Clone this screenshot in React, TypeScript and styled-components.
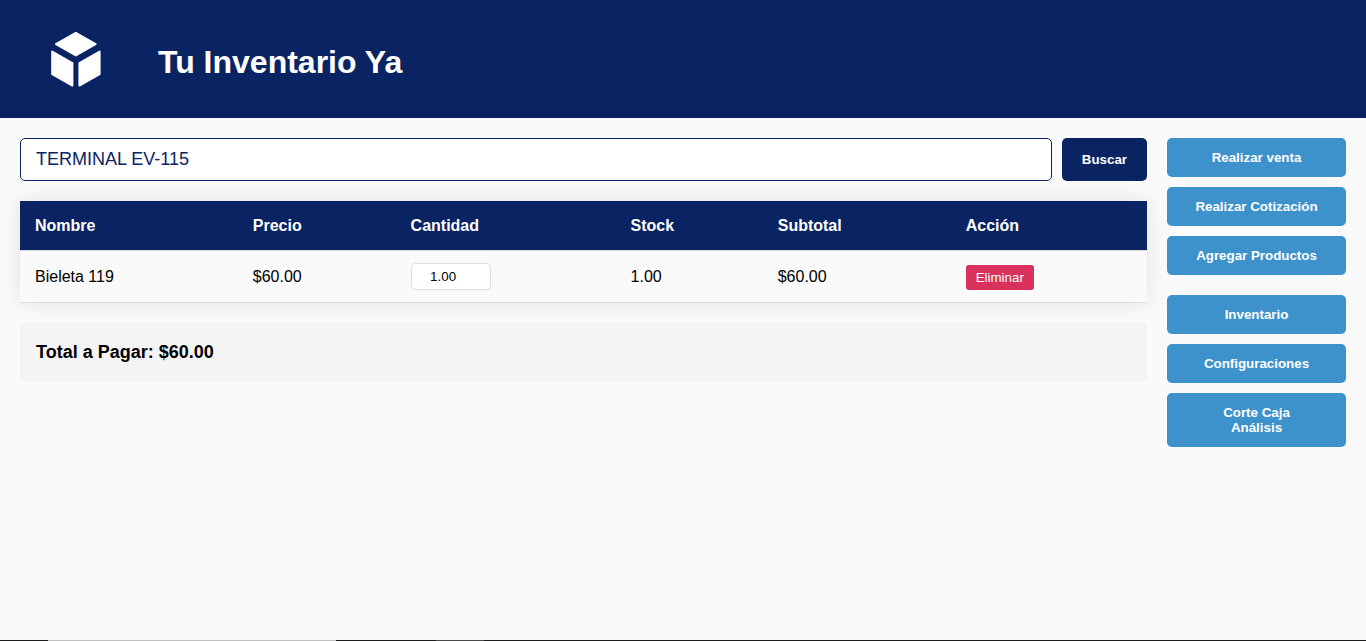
import React, { useState } from 'react';
import styled, { createGlobalStyle } from 'styled-components';

const navy = '#0a2463';
const blue = '#3e92cc';
const red = '#d8315b';

const GlobalStyle = createGlobalStyle`
  *, *::before, *::after { box-sizing: border-box; }
  body {
    margin: 0;
    background: #fafafb;
    color: #000;
    font-family: "Liberation Sans", Arial, sans-serif;
    font-size: 16px;
  }
  button, input { font-family: inherit; }
`;

const Page = styled.div`
  min-height: 100vh;
  display: flex;
  flex-direction: column;
`;

const Header = styled.header`
  display: flex;
  align-items: center;
  gap: 56px;
  min-height: 118px;
  padding: 0 50px;
  background: ${navy};
  color: #fff;
`;

const Logo = styled.svg`
  width: 52px;
  height: 58px;
  flex: none;
`;

const Title = styled.h1`
  margin: 0;
  padding-top: 6px;
  font-size: 32px;
  line-height: 36px;
`;

const Content = styled.div`
  flex: 1;
  display: grid;
  grid-template-columns: minmax(0, 1fr) 179px;
  gap: 20px;
  align-items: start;
  padding: 20px;
`;

const Main = styled.main`
  display: flex;
  flex-direction: column;
  gap: 20px;
`;

const SearchForm = styled.form`
  display: flex;
  gap: 10px;
`;

const SearchInput = styled.input`
  flex: 1;
  min-width: 0;
  height: 43px;
  padding: 0 15px;
  border: 1px solid ${navy};
  border-radius: 5px;
  background: #fff;
  color: ${navy};
  font-size: 18px;
  outline: none;
`;

const SearchButton = styled.button`
  padding: 0 20px;
  border: 0;
  border-radius: 5px;
  background: ${navy};
  color: #fff;
  font-weight: bold;
  cursor: pointer;
`;

const Table = styled.table`
  width: 100%;
  border-collapse: separate;
  border-spacing: 0;
  box-shadow: 0 0 20px rgba(0, 0, 0, 0.1);
  background: #fafafb;
`;

const HeadCell = styled.th`
  height: 50px;
  padding: 0 15px;
  border-bottom: 1px solid #ddd;
  background: ${navy};
  background-clip: padding-box;
  color: #fff;
  text-align: left;
`;

const Cell = styled.td`
  height: 52px;
  padding: 0 15px;
  border-bottom: 1px solid #ddd;
`;

const QuantityInput = styled.input`
  display: block;
  width: 80px;
  height: 27px;
  padding: 5px 20px 5px 5px;
  border: 1px solid #ddd;
  border-radius: 4px;
  background: #fff;
  color: #000;
  text-align: center;
`;

const DeleteButton = styled.button`
  display: block;
  margin-top: 2px;
  padding: 5px 10px;
  border: 0;
  border-radius: 3px;
  background: ${red};
  color: #fff;
  cursor: pointer;
`;

const Total = styled.p`
  margin: 0;
  padding: 19px 16px;
  border-radius: 5px;
  background: #f4f4f4;
  font-size: 18px;
  font-weight: bold;
  line-height: 21px;
`;

const Sidebar = styled.nav`
  display: flex;
  flex-direction: column;
  gap: 20px;
`;

const ActionGroup = styled.div`
  display: flex;
  flex-direction: column;
  gap: 10px;
`;

const ActionButton = styled.button`
  padding: 12px 20px;
  border: 0;
  border-radius: 5px;
  background: ${blue};
  color: #fff;
  font-weight: bold;
  cursor: pointer;
`;

const BottomEdge = styled.footer`
  display: flex;
  height: 1px;
  background: #1e1b1c;
`;

const EdgeSegment = styled.span<{ $width: number; $color?: string }>`
  width: ${(p) => p.$width}px;
  background: ${(p) => p.$color ?? 'transparent'};
`;

const columns = ['Nombre', 'Precio', 'Cantidad', 'Stock', 'Subtotal', 'Acción'];

export default function App() {
  const [query, setQuery] = useState('TERMINAL EV-115');
  const [quantity, setQuantity] = useState('1.00');

  return (
    <Page>
      <GlobalStyle />
      <Header>
        <Logo viewBox="0 0 52 58" aria-hidden="true">
          <g fill="#fff" stroke="#fff" strokeWidth="2" strokeLinejoin="round">
            <path d="M25.8 2.8 45.6 14.2 25.8 25.4 6 14.2Z" />
            <path d="M2.2 21.5 22.4 33.1V55.6L2.2 44.2Z" />
            <path d="M49.6 21.5 29.4 33.1V55.6L49.6 44.2Z" />
          </g>
        </Logo>
        <Title>Tu Inventario Ya</Title>
      </Header>
      <Content>
        <Main>
          <SearchForm onSubmit={(e) => e.preventDefault()}>
            <SearchInput
              type="text"
              aria-label="Buscar producto"
              value={query}
              onChange={(e) => setQuery(e.target.value)}
            />
            <SearchButton type="submit">Buscar</SearchButton>
          </SearchForm>
          <Table>
            <thead>
              <tr>
                {columns.map((name) => (
                  <HeadCell key={name} scope="col">{name}</HeadCell>
                ))}
              </tr>
            </thead>
            <tbody>
              <tr>
                <Cell>Bieleta 119</Cell>
                <Cell>$60.00</Cell>
                <Cell>
                  <QuantityInput
                    type="text"
                    inputMode="decimal"
                    aria-label="Cantidad"
                    value={quantity}
                    onChange={(e) => setQuantity(e.target.value)}
                  />
                </Cell>
                <Cell>1.00</Cell>
                <Cell>$60.00</Cell>
                <Cell>
                  <DeleteButton type="button">Eliminar</DeleteButton>
                </Cell>
              </tr>
            </tbody>
          </Table>
          <Total>Total a Pagar: $60.00</Total>
        </Main>
        <Sidebar>
          <ActionGroup>
            <ActionButton type="button">Realizar venta</ActionButton>
            <ActionButton type="button">Realizar Cotización</ActionButton>
            <ActionButton type="button">Agregar Productos</ActionButton>
          </ActionGroup>
          <ActionGroup>
            <ActionButton type="button">Inventario</ActionButton>
            <ActionButton type="button">Configuraciones</ActionButton>
            <ActionButton type="button">
              Corte Caja
              <br />
              Análisis
            </ActionButton>
          </ActionGroup>
        </Sidebar>
      </Content>
      <BottomEdge>
        <EdgeSegment $width={48} />
        <EdgeSegment $width={288} $color="#c2c0c1" />
        <EdgeSegment $width={100} />
        <EdgeSegment $width={48} $color="#4b494a" />
      </BottomEdge>
    </Page>
  );
}
